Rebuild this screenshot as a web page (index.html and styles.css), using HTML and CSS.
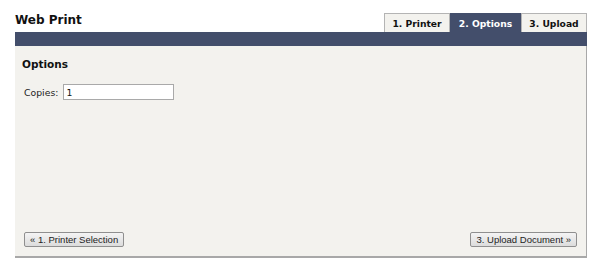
FILE: index.html
```html
<!DOCTYPE html>
<html>
<head>
<meta charset="utf-8">
<link rel="stylesheet" href="styles.css">
</head>
<body>
<div class="app">
  <div class="top">
    <h1 class="title">Web Print</h1>
    <div class="tabs">
      <div class="tab">1. Printer</div>
      <div class="tab active">2. Options</div>
      <div class="tab">3. Upload</div>
    </div>
  </div>
  <div class="bar"></div>
  <div class="panel">
    <h2 class="heading">Options</h2>
    <div class="field">
      <label class="label">Copies:</label>
      <input class="input" type="text" value="1">
    </div>
    <div class="spacer"></div>
    <div class="actions">
      <button class="btn">« 1. Printer Selection</button>
      <button class="btn">3. Upload Document »</button>
    </div>
  </div>
</div>
</body>
</html>
```
FILE: styles.css
```css
html, body {
  margin: 0;
  padding: 0;
  background: #ffffff;
}
.app {
  width: 572px;
  margin-left: 15px;
  font-family: "DejaVu Sans", Verdana, sans-serif;
}
.top {
  height: 32px;
  display: flex;
  justify-content: space-between;
  align-items: flex-end;
}
.title {
  margin: 0;
  font-size: 12px;
  font-weight: bold;
  line-height: 14px;
  color: #111;
  align-self: flex-start;
  padding-top: 13px;
}
.tabs {
  display: flex;
  height: 19px;
}
.tab {
  box-sizing: border-box;
  height: 19px;
  padding: 4px 0 0;
  text-align: center;
  font-size: 9.2px;
  font-weight: bold;
  line-height: 12px;
  color: #111;
  background: #f3f2ee;
  border: 1px solid #b4b4b4;
  border-bottom: none;
  width: 66px;
}
.tab.active {
  width: 71px;
  background: #434e6b;
  border-color: #434e6b;
  color: #ffffff;
}
.bar {
  height: 14px;
  background: #434e6b;
}
.panel {
  box-sizing: border-box;
  height: 212px;
  background: #f3f2ee;
  border-right: 1px solid #a8a8a8;
  border-bottom: 2px solid #a8a8a8;
  padding: 12px 9px 9px 7px;
  display: flex;
  flex-direction: column;
}
.heading {
  margin: 0;
  font-size: 10.5px;
  font-weight: bold;
  line-height: 13px;
  color: #111;
}
.field {
  display: flex;
  align-items: center;
  margin-top: 13px;
  padding-left: 2px;
}
.label {
  font-size: 9.3px;
  color: #222;
  margin-right: 5px;
}
.input {
  box-sizing: border-box;
  width: 111px;
  height: 16px;
  border: 1px solid #a9a9a9;
  background: #fff;
  padding: 0 2px;
  font-family: "DejaVu Sans", Verdana, sans-serif;
  font-size: 9.3px;
  color: #111;
  margin: 0;
}
.spacer {
  flex: 1;
}
.actions {
  display: flex;
  justify-content: space-between;
  padding-left: 2px;
}
.btn {
  box-sizing: border-box;
  height: 15px;
  padding: 0 5px;
  font-family: "Liberation Sans", Arial, sans-serif;
  font-size: 9.5px;
  line-height: 12px;
  color: #222;
  background: linear-gradient(#f4f4f4, #dcdcdc);
  border: 1px solid #8f8f8f;
  border-radius: 2px;
  margin: 0;
}
```
